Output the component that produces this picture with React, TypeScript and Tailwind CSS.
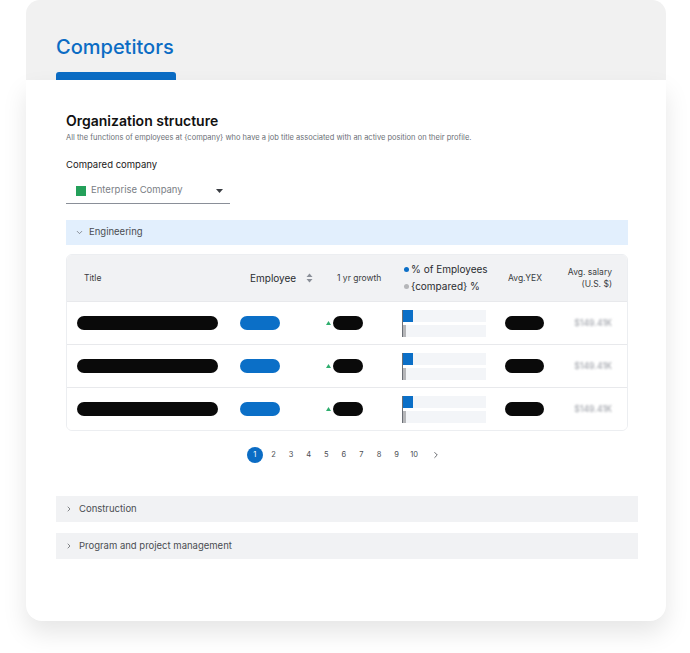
import { ChevronDown, ChevronRight } from "lucide-react";

const rows = [0, 1, 2];
const pages = [1, 2, 3, 4, 5, 6, 7, 8, 9, 10];

function SortIcon() {
  return (
    <svg width="7" height="10" viewBox="0 0 7 10" className="ml-[10px]">
      <path d="M3.5 0.5 L6.5 4 L0.5 4 Z" fill="#8a8f98" />
      <path d="M3.5 9.5 L6.5 6 L0.5 6 Z" fill="#8a8f98" />
    </svg>
  );
}

function Pill({ className }: { className: string }) {
  return <div className={`h-[14px] rounded-full ${className}`} />;
}

function Row() {
  return (
    <div className="flex h-[43px] items-center border-t border-[#e8e9ec] bg-white">
      <div className="w-[173px] pl-[10px]">
        <Pill className="w-[141px] bg-[#0a0a0a]" />
      </div>
      <div className="w-[86px]">
        <Pill className="w-[40px] bg-[#0b6fc7]" />
      </div>
      <div className="flex w-[76px] items-center">
        <svg width="5" height="4" viewBox="0 0 5 4" className="mr-[2px]">
          <path d="M2.5 0 L5 4 L0 4 Z" fill="#2fae6e" />
        </svg>
        <Pill className="w-[30px] bg-[#0a0a0a]" />
      </div>
      <div className="w-[103px]">
        <div className="flex w-[84px] flex-col gap-[3px] border-l border-[#6b6f76]">
          <div className="h-[12px] bg-[#f3f5f8]">
            <div className="h-full w-[10px] bg-[#0b6fc7]" />
          </div>
          <div className="h-[12px] bg-[#f3f5f8]">
            <div className="h-full w-[3px] bg-[#b5b6b9]" />
          </div>
        </div>
      </div>
      <div className="w-[60px]">
        <Pill className="w-[39px] bg-[#0a0a0a]" />
      </div>
      <div className="flex flex-1 justify-end pr-[15px]">
        <span className="text-[8.5px] font-semibold text-[#aeb1b7] blur-[1px]">$149.41K</span>
      </div>
    </div>
  );
}

export default function App() {
  return (
    <div
      className="h-[653px] w-[690px] overflow-hidden bg-white pl-[26px] pr-[24px]"
      style={{ fontFamily: "Inter, 'Noto Sans', sans-serif" }}
    >
      {/* top tab area */}
      <div className="h-[80px] rounded-t-[14px] bg-[#f1f1f1] pl-[30px] pt-[34px]">
        <div className="text-[20px] font-medium leading-[26px] text-[#0b6cc4]">Competitors</div>
        <div className="mt-[12px] h-[8px] w-[120px] rounded-t-[3px] bg-[#0b6cc4]" />
      </div>

      {/* main card */}
      <div className="relative h-[541px] rounded-b-[16px] bg-white pl-[30px] pr-[28px] pt-[32px] shadow-[0_12px_24px_rgba(0,0,0,0.10)]">
        <div className="px-[10px]">
          <h2 className="text-[14px] font-semibold leading-[18px] text-[#111]">Organization structure</h2>
          <p className="mt-[3px] text-[7.5px] leading-[10px] text-[#6b6f76]">
            All the functions of employees at {"{company}"} who have a job title associated with an active position on their profile.
          </p>
          <div className="mt-[16px] text-[9.5px] leading-[12px] text-[#1a1a1a]">Compared company</div>
          <div className="mt-[7px] flex h-[26px] w-[164px] items-center border-b border-[#8a8f98] pl-[10px] pr-[4px]">
            <div className="h-[10px] w-[10px] bg-[#24a05a]" />
            <span className="ml-[5px] text-[9.5px] text-[#7a7e85]">Enterprise Company</span>
            <svg width="7" height="4" viewBox="0 0 7 4" className="ml-auto mr-[3px]">
              <path d="M0 0 L7 0 L3.5 4 Z" fill="#3a3d42" />
            </svg>
          </div>

          {/* Engineering accordion */}
          <div className="mt-[16px] flex h-[25px] items-center bg-[#e2effd] pl-[9px]">
            <ChevronDown size={9} strokeWidth={2} className="text-[#6b6f76]" />
            <span className="ml-[5px] text-[9.5px] text-[#4a4d52]">Engineering</span>
          </div>

          {/* table */}
          <div className="mt-[9px] overflow-hidden rounded-[6px] border border-[#eceef1]">
            <div className="flex h-[46px] items-center bg-[#f1f2f4]">
              <div className="w-[173px] pl-[17px] text-[8.5px] text-[#3a3d42]">Title</div>
              <div className="flex w-[86px] items-center pl-[10px] text-[10px] text-[#2a2c30]">
                Employee
                <SortIcon />
              </div>
              <div className="w-[76px] pl-[11px] text-[8.5px] text-[#3a3d42]">1 yr growth</div>
              <div className="flex w-[103px] flex-col gap-[4px] pl-[2px] text-[10px] leading-[13px] text-[#2a2c30]">
                <div className="flex items-center">
                  <span className="mr-[2px] h-[5px] w-[5px] rounded-full bg-[#0b6fc7]" />% of Employees
                </div>
                <div className="flex items-center">
                  <span className="mr-[2px] h-[5px] w-[5px] rounded-full bg-[#b5b6b9]" />
                  {"{compared}"} %
                </div>
              </div>
              <div className="w-[60px] pl-[3px] text-[8.5px] text-[#3a3d42]">Avg.YEX</div>
              <div className="flex-1 whitespace-nowrap pr-[15px] text-right text-[8.5px] leading-[12px] text-[#3a3d42]">
                Avg. salary
                <br />
                (U.S. $)
              </div>
            </div>
            {rows.map((r) => (
              <Row key={r} />
            ))}
          </div>

          {/* pagination */}
          <div className="mt-[16px] flex items-center justify-center pr-[6px] text-[7.5px] text-[#4a4d52]">
            {pages.map((p) =>
              p === 1 ? (
                <div
                  key={p}
                  className="flex h-[16px] w-[16px] items-center justify-center rounded-full bg-[#0b6cc4] text-white"
                >
                  {p}
                </div>
              ) : (
                <div key={p} className={`${p === 2 ? "ml-[5.6px]" : "ml-[7.6px]"} w-[10px] text-center`}>
                  {p}
                </div>
              )
            )}
            <ChevronRight size={10} strokeWidth={2} className="ml-[12px] text-[#4a4d52]" />
          </div>
        </div>

        {/* collapsed accordions */}
        <div className="mt-[33px] flex h-[26px] items-center bg-[#f1f2f4] pl-[9px]">
          <ChevronRight size={8} strokeWidth={2} className="text-[#4a4d52]" />
          <span className="ml-[6px] text-[9.5px] text-[#4a4d52]">Construction</span>
        </div>
        <div className="mt-[11px] flex h-[26px] items-center bg-[#f1f2f4] pl-[9px]">
          <ChevronRight size={8} strokeWidth={2} className="text-[#4a4d52]" />
          <span className="ml-[6px] text-[9.5px] text-[#4a4d52]">Program and project management</span>
        </div>
      </div>
    </div>
  );
}
